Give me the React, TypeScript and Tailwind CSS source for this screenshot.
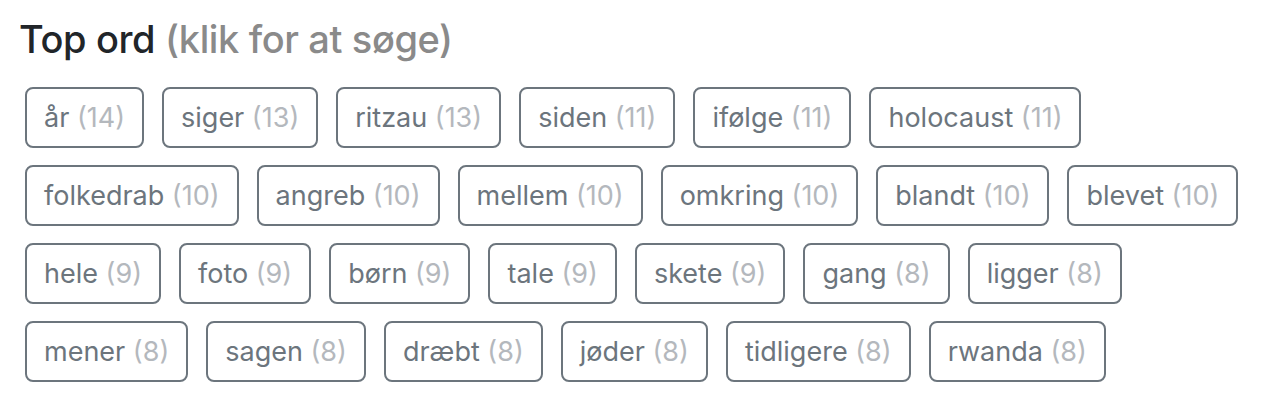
const words: [string, number][] = [
  ["år", 14],
  ["siger", 13],
  ["ritzau", 13],
  ["siden", 11],
  ["ifølge", 11],
  ["holocaust", 11],
  ["folkedrab", 10],
  ["angreb", 10],
  ["mellem", 10],
  ["omkring", 10],
  ["blandt", 10],
  ["blevet", 10],
  ["hele", 9],
  ["foto", 9],
  ["børn", 9],
  ["tale", 9],
  ["skete", 9],
  ["gang", 8],
  ["ligger", 8],
  ["mener", 8],
  ["sagen", 8],
  ["dræbt", 8],
  ["jøder", 8],
  ["tidligere", 8],
  ["rwanda", 8],
];

function WordChip({ word, count }: { word: string; count: number }) {
  return (
    <button
      type="button"
      className="flex h-[61px] items-center rounded-[8px] border-2 border-[#6c757d] bg-white px-[17px] text-[27px] leading-none text-[#6c757d]"
    >
      {word} <span className="ml-[0.28em] text-[#b4b8bd]">({count})</span>
    </button>
  );
}

export default function App() {
  return (
    <div className="h-[402px] w-[1264px] bg-white pl-[19px] pt-[18px] font-['Inter','Liberation_Sans',sans-serif]">
      <h2 className="text-[38px] leading-[42px] font-medium tracking-[-0.01em] text-[#212529]">
        Top ord <span className="text-[#8a8a8a]">(klik for at søge)</span>
      </h2>
      <div className="mt-[27px] flex w-[1230px] flex-wrap gap-x-[18px] gap-y-[17px] pl-[6px]">
        {words.map(([word, count]) => (
          <WordChip key={word} word={word} count={count} />
        ))}
      </div>
    </div>
  );
}
